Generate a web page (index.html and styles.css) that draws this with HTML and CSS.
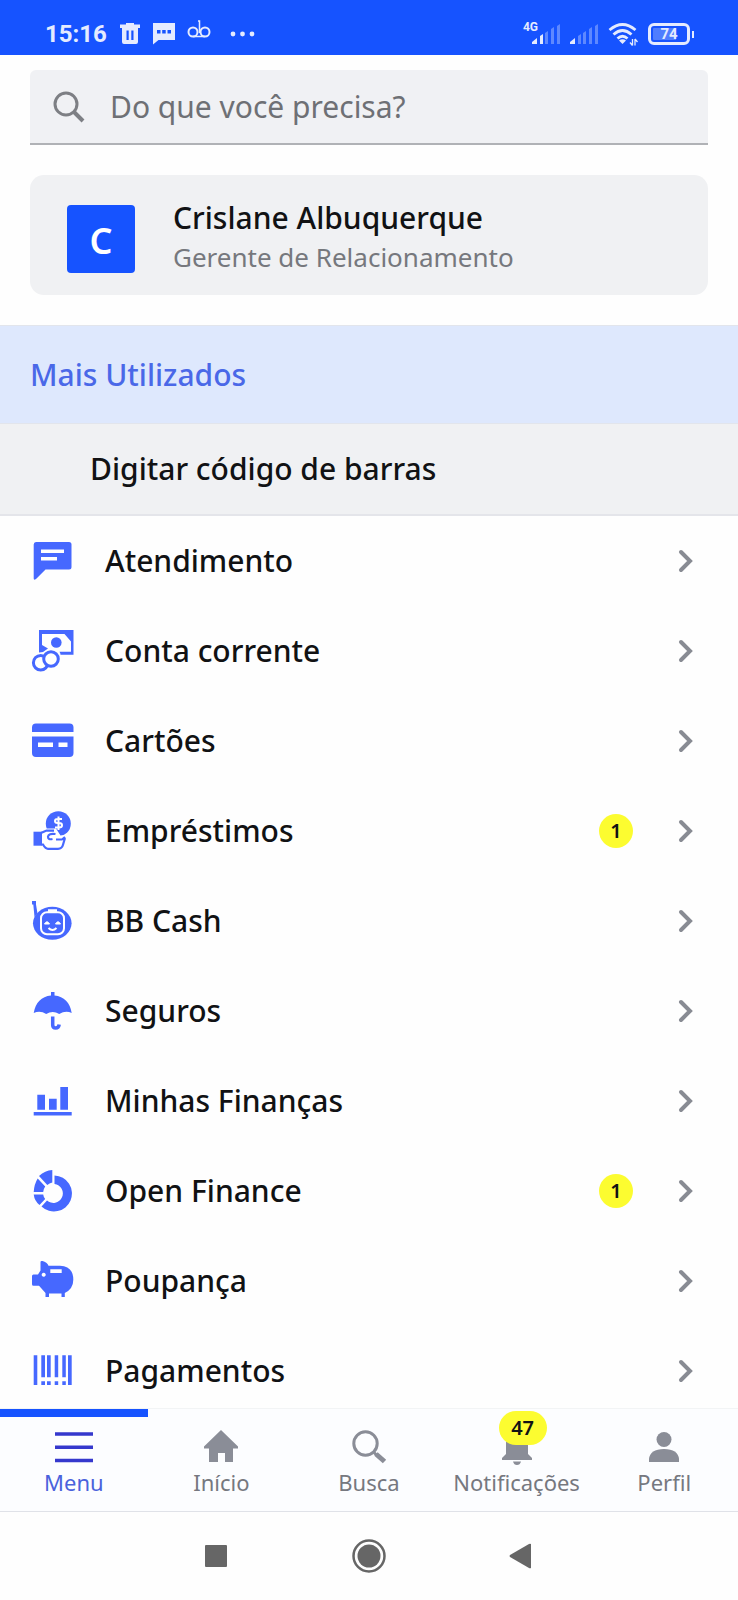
FILE: index.html
```
<!DOCTYPE html>
<html lang="pt-BR">
<head>
<meta charset="utf-8">
<meta name="viewport" content="width=device-width, initial-scale=1">
<title>Menu</title>
<link rel="stylesheet" href="styles.css">
</head>
<body>
<svg class="defs" aria-hidden="true">
  <symbol id="chevron" viewBox="0 0 16 24"><path d="M3 3l9 9-9 9" fill="none" stroke="currentColor" stroke-width="4" stroke-linecap="round"/></symbol>
</svg>

<div class="status">
  <div class="status-group">
    <span class="clock">15:16</span>
    <svg class="st-trash" width="20" height="22" viewBox="0 0 20 22" fill="currentColor"><path fill-rule="evenodd" d="M6 0h8v1.500h6V5H0V1.500h6zM2 5h16v14q0 2-2 2H4q-2 0-2-2zM6.500 7.500V17h2.200V7.500zM11.300 7.500V17h2.200V7.500z"/></svg>
    <svg class="st-chat" width="24" height="22" viewBox="0 0 24 22" fill="currentColor"><path fill-rule="evenodd" d="M1 0h22v17H6.500L1 21.500zM5 7v3.500h3.500V7zM10.200 7v3.500h3.500V7zM15.500 7v3.500H19V7z"/></svg>
    <svg class="st-voice" width="24" height="20" viewBox="0 0 24 20" fill="none" stroke="currentColor" stroke-width="2"><circle cx="6" cy="12" r="4.500"/><circle cx="18" cy="12" r="4.500"/><path d="M6 16.500h12M11 1h1.500v12" stroke-width="1.500"/></svg>
    <svg class="st-dots" width="26" height="6" viewBox="0 0 26 6" fill="currentColor"><circle cx="3" cy="3" r="2.400"/><circle cx="12.500" cy="3" r="2.400"/><circle cx="22" cy="3" r="2.400"/></svg>
  </div>
  <div class="status-group status-right">
    <div class="signal"><span class="net">4G</span>
      <svg width="28" height="20" viewBox="0 0 28 20" fill="currentColor"><path d="M0 20v-2l5-4v6zM8 12l3-2v10H8z"/><path opacity=".35" d="M13 9l3-2v13h-3zM19 5l3-2v17h-3zM25 2l3-2v20h-3z"/></svg>
    </div>
    <svg width="28" height="20" viewBox="0 0 28 20" fill="currentColor"><path d="M0 20v-2l5-4v6z"/><path opacity=".35" d="M8 12l3-2v10H8zM13 9l3-2v13h-3zM19 5l3-2v17h-3zM25 2l3-2v20h-3z"/></svg>
    <svg width="30" height="24" viewBox="0 0 30 24" fill="none" stroke="currentColor" stroke-width="2.800"><path d="M1.500 8Q14.500 -3 27.500 8M5.500 12.500q9-8 18 0M9.500 16.500q5-4.500 10 0"/><path d="M11 18.500q3.500-2.500 7 0L14.500 22z" fill="currentColor" stroke="none"/><path d="M24.500 17v6.500M22 20.500l2.500 3M27 23.500V17M29.500 20L27 17" stroke-width="1.300"/></svg>
    <div class="battery"><span>74</span></div>
  </div>
</div>

<header class="top">
  <label class="search">
    <svg width="32" height="32" viewBox="0 0 32 32" fill="none" stroke="currentColor" stroke-width="3"><circle cx="13" cy="13" r="11"/><path d="M20.500 20.500L30 30" stroke-width="4"/></svg>
    <input type="search" placeholder="Do que você precisa?" aria-label="Do que você precisa?">
  </label>
  <div class="manager">
    <div class="avatar">C</div>
    <div class="manager-text">
      <div class="manager-name">Crislane Albuquerque</div>
      <div class="manager-role">Gerente de Relacionamento</div>
    </div>
  </div>
</header>

<main class="content">
  <h2 class="section">Mais Utilizados</h2>
  <a class="shortcut" href="#">Digitar código de barras</a>
  <nav class="menu">
    <a class="row" href="#">
      <svg class="icon" viewBox="0 0 48 48" fill="currentColor"><path fill-rule="evenodd" d="M8 5h33q2.500 0 2.500 2.500V30q0 2.500-2.500 2.500H17.500L8 42q-2.300 1.500-2.300-.5v-34Q5.700 5 8 5zM13 12.500V16h23v-3.500zM13 20v3.500h16V20z"/></svg>
      <span class="label">Atendimento</span><svg class="chev"><use href="#chevron"/></svg></a>
    <a class="row" href="#">
      <svg class="icon" viewBox="0 0 48 48"><path fill="currentColor" fill-rule="evenodd" d="M11 3h34.500v24.700H32.500q0-1.600-1-3H43V14.500L36.500 7H14v11l6 3.500-5 3.500-4 .5z"/><circle cx="28.300" cy="15.500" r="5.300" fill="currentColor"/><circle cx="12.700" cy="35.700" r="7.300" fill="#fff" stroke="currentColor" stroke-width="3"/><circle cx="23" cy="32" r="7.300" fill="#fff" stroke="currentColor" stroke-width="3"/></svg>
      <span class="label">Conta corrente</span><svg class="chev"><use href="#chevron"/></svg></a>
    <a class="row" href="#">
      <svg class="icon" viewBox="0 0 48 48" fill="currentColor"><path fill-rule="evenodd" d="M4 15V10.500q0-4 4-4h33.500q4 0 4 4V15zM4 19.500h41.500V36q0 4-4 4H8q-4 0-4-4zM10 25.500V30h15v-4.500zM30.500 25.500V30h9v-4.500z"/></svg>
      <span class="label">Cartões</span><svg class="chev"><use href="#chevron"/></svg></a>
    <a class="row" href="#">
      <svg class="icon" viewBox="0 0 48 48"><circle cx="30.300" cy="16.700" r="12.500" fill="currentColor"/><path d="M34 12h-4.500q-2.500 0-2.500 2t2.500 2h1.500q3 0 3 2.200t-3 2.300H27M30.500 9.500V23" fill="none" stroke="#fff" stroke-width="2"/><path d="M14 21.500h14l4.500 7 6-.5-3 12-14 3-8-6z" fill="#fff"/><path d="M5.500 24.700H14v14H5.500z" fill="currentColor"/><path d="M13.500 25.800l5-2.200H26M13.500 37.500H15q2.500 4.300 5 4.300h10q4 0 5-4l2-6.800M27.500 27q-7-1-7.500 2.700 0 3.300 4.500 2.300M28 32.500h6l3-2.500" fill="none" stroke="currentColor" stroke-width="2.200"/></svg>
      <span class="label">Empréstimos</span><span class="badge">1</span><svg class="chev"><use href="#chevron"/></svg></a>
    <a class="row" href="#">
      <svg class="icon" viewBox="0 0 48 48"><path d="M4 4h4v3.500l1.500 9L6.500 20 5.300 7.500H4z" fill="currentColor"/><ellipse cx="24.300" cy="26.300" rx="19.300" ry="16.500" fill="currentColor"/><rect x="13" y="15.300" width="23" height="22" rx="6" fill="none" stroke="#fff" stroke-width="2"/><path d="M20 14h9" stroke="#fff" stroke-width="3.500"/><path d="M16.500 27q2.500-4.500 5 0zM27.500 27q2.500-4.500 5 0z" fill="#fff" stroke="#fff"/><path d="M20.500 31q4 4 8 0" fill="none" stroke="#fff" stroke-width="2"/></svg>
      <span class="label">BB Cash</span><svg class="chev"><use href="#chevron"/></svg></a>
    <a class="row" href="#">
      <svg class="icon" viewBox="0 0 48 48"><path d="M23 5h3.500v3.500Q41 10 43.700 26q-6-3-12.500 1-6.500-4-13 0-6-4-12.500-1Q8.500 10 23 8.500z" fill="currentColor"/><path d="M24.700 29.500V38q0 3 3 3t3.500-3.500" fill="none" stroke="currentColor" stroke-width="3.500"/></svg>
      <span class="label">Seguros</span><svg class="chev"><use href="#chevron"/></svg></a>
    <a class="row" href="#">
      <svg class="icon" viewBox="0 0 48 48" fill="currentColor"><path d="M9.300 17.700H17v15H9.300zM21 21.700h7.700v11H21zM32.300 10H40v22.700h-7.700zM5.700 35h38v3.500h-38z"/></svg>
      <span class="label">Minhas Finanças</span><svg class="chev"><use href="#chevron"/></svg></a>
    <a class="row" href="#">
      <svg class="icon" viewBox="0 0 48 48"><path fill="currentColor" d="M26.500 8.500A18 18 0 1 1 13.500 39.500L19 33.500A9.500 9.500 0 1 0 26.500 17zM24.300 3v12.500q-3 .5-5 2.500L11 9q6-5.500 13.300-6zM9.700 11.500l7.500 8q-1.800 2.500-2 5.500H5.700q.5-8 4-13.500zM5.700 27.500h9.500q.3 2.500 2 4.500L11.500 38q-5-4-5.800-10.500z"/></svg>
      <span class="label">Open Finance</span><span class="badge">1</span><svg class="chev"><use href="#chevron"/></svg></a>
    <a class="row" href="#">
      <svg class="icon" viewBox="0 0 48 48" fill="currentColor"><path fill-rule="evenodd" d="M12.500 5q0-1.500 2-1 4.500 1.200 6 4.700H32q13.300.5 13.300 14 0 9-8.500 13.300V40h-3.300v-3.500H21V40h-3.500v-4L11 28.700H5.500q-1.500 0-1.500-1.500V19q0-1.500 1.500-1.500H10l2.500-4zM22.300 12.300V16h11.400v-3.700zM15.700 15.700a2 2 0 1 0 .01 0z"/></svg>
      <span class="label">Poupança</span><svg class="chev"><use href="#chevron"/></svg></a>
    <a class="row" href="#">
      <svg class="icon" viewBox="0 0 48 48" fill="currentColor"><path d="M5.700 8.300h3.600V38H5.700zM40 8.300h3.700V38H40zM13.300 8.300H17v22h-3.700zM19 8.300h3.700v22H19zM26.700 8.300h3.500v22h-3.500zM34.300 8.300h3.500v22h-3.500zM13.300 34.300H17V38h-3.700zM19 34.300h3.700V38H19zM26.700 34.300h3.500V38h-3.500zM34.300 34.300h3.500V38h-3.500z"/></svg>
      <span class="label">Pagamentos</span><svg class="chev"><use href="#chevron"/></svg></a>
  </nav>
</main>

<nav class="tabs">
  <a class="tab active" href="#"><svg class="tab-icon" viewBox="0 0 40 36"><path d="M1 4h38M1 17.200h38M1 30.400h38" stroke="#3538cd" stroke-width="3.500"/></svg><span>Menu</span></a>
  <a class="tab" href="#"><svg class="tab-icon" viewBox="0 0 40 36" fill="currentColor"><path d="M20 0l17 16.500v2h-5V32h-8v-9h-7v9H8V18.500H3v-2z"/></svg><span>Início</span></a>
  <a class="tab" href="#"><svg class="tab-icon" viewBox="0 0 40 36" fill="none" stroke="currentColor"><circle cx="16.500" cy="13.500" r="11.700" stroke-width="3"/><path d="M24.500 22l3 3" stroke-width="3"/><path d="M27 24l8.500 7.500" stroke-width="5"/></svg><span>Busca</span></a>
  <a class="tab" href="#"><span class="bell"><svg class="tab-icon" viewBox="0 0 40 36" fill="currentColor"><path d="M9 8q2-7 11-7t11 7v16l4 4v2H5v-2l4-4zM16 31.500h8q-1 3.500-4 3.500t-4-3.500z"/></svg><b class="count">47</b></span><span>Notificações</span></a>
  <a class="tab" href="#"><svg class="tab-icon" viewBox="0 0 40 36" fill="currentColor"><circle cx="20" cy="9.500" r="7.500"/><path d="M5 32v-3q1-10 15-10t15 10v3z"/></svg><span>Perfil</span></a>
</nav>

<div class="system">
  <button aria-label="Recentes"><svg width="22" height="22" viewBox="0 0 22 22"><rect width="22" height="22" rx="1" fill="#666"/></svg></button>
  <button aria-label="Tela inicial"><svg width="34" height="34" viewBox="0 0 34 34"><circle cx="17" cy="17" r="15.500" fill="none" stroke="#666" stroke-width="2.500"/><circle cx="17" cy="17" r="11.500" fill="#666"/></svg></button>
  <button aria-label="Voltar"><svg width="26" height="26" viewBox="0 0 26 26"><path d="M22 1v24q-1 .5-2 0L1 14q-1-1 0-2L20 1q1-.5 2 0z" fill="#666"/></svg></button>
</div>
</body>
</html>
```
FILE: styles.css
```
* { box-sizing: border-box; }

body {
  margin: 0;
  height: 100vh;
  display: flex;
  flex-direction: column;
  background: #fefefe;
  color: #111214;
  font-family: "Noto Sans", "Open Sans", sans-serif;
}

a { color: inherit; text-decoration: none; }
svg { display: block; flex: none; }
.defs { position: absolute; width: 0; height: 0; }

/* status bar */
.status {
  flex: none;
  height: 55px;
  padding: 13px 48px 0 45px;
  display: flex;
  justify-content: space-between;
  background: #1653ff;
  color: #e4ebff;
  font-family: Roboto, sans-serif;
}
.status-group { display: flex; align-items: center; height: 42px; }
.clock { font-size: 24px; font-weight: 700; line-height: 42px; }
.st-trash { margin-left: 13px; }
.st-chat { margin-left: 12px; }
.st-voice { margin: 0 19px 8px 11px; }
.status-right { gap: 10px; }
.signal { display: flex; align-items: center; }
.net { font-size: 12px; font-weight: 700; line-height: 14px; margin: 0 -6px 14px 0; }
.battery {
  position: relative;
  width: 42px;
  height: 22px;
  border: 3px solid currentColor;
  border-radius: 6px;
  background: linear-gradient(90deg, #4f7dff 72%, transparent 72%) content-box;
  padding: 2px;
  font-size: 15px;
  font-weight: 700;
  line-height: 13px;
  text-align: center;
}
.battery::after {
  content: "";
  position: absolute;
  right: -7px;
  top: 5px;
  width: 2px;
  height: 7px;
  background: currentColor;
}

/* search and manager card */
.top {
  flex: none;
  padding: 15px 30px 30px;
  display: flex;
  flex-direction: column;
  gap: 30px;
}
.search {
  height: 75px;
  padding: 0 23px;
  display: flex;
  align-items: center;
  gap: 25px;
  background: #f0f1f4;
  border-bottom: 2px solid #b0b2b6;
  border-radius: 6px 6px 0 0;
  color: #7d7f84;
}
.search input {
  flex: 1;
  min-width: 0;
  padding: 0;
  border: 0;
  outline: 0;
  background: none;
  font: 400 30px/40px "Noto Sans", sans-serif;
  color: #111214;
}
.search input::placeholder { color: #6e7075; opacity: 1; }
.manager {
  height: 120px;
  padding: 4px 37px 0;
  display: flex;
  align-items: center;
  gap: 38px;
  background: #f0f1f3;
  border-radius: 14px;
}
.avatar {
  width: 68px;
  height: 68px;
  margin-top: 4px;
  border-radius: 4px;
  background: #1653ff;
  color: #fff;
  font-size: 36px;
  font-weight: 600;
  line-height: 72px;
  text-align: center;
}
.manager-name { font-size: 30px; font-weight: 500; line-height: 40px; }
.manager-role { font-size: 26px; line-height: 38px; color: #76787d; }

/* menu */
.content {
  flex: 1;
  min-height: 0;
  overflow: hidden;
}
.section {
  margin: 0;
  height: 99px;
  padding: 0 30px;
  border: solid #e2e5ec;
  border-width: 1px 0;
  background: #dee8fd;
  color: #4a68e8;
  font-size: 30px;
  font-weight: 500;
  line-height: 97px;
}
.shortcut {
  display: block;
  padding: 0 90px;
  border-bottom: 2px solid #e4e5ea;
  background: #f0f1f3;
  font-size: 30px;
  font-weight: 500;
  line-height: 90px;
}
.row {
  height: 90px;
  padding: 0 44px 0 28px;
  display: flex;
  align-items: center;
}
.icon { width: 48px; height: 48px; margin-right: 29px; color: #4668ff; }
.label { flex: 1; font-size: 30px; font-weight: 500; line-height: 40px; }
.badge {
  width: 34px;
  height: 34px;
  margin-right: 45px;
  border-radius: 17px;
  background: #fcfc30;
  font-size: 20px;
  font-weight: 600;
  line-height: 34px;
  text-align: center;
}
.chev { width: 16px; height: 24px; color: #888b93; }

/* tab bar */
.tabs {
  flex: none;
  height: 104px;
  display: grid;
  grid-template-columns: repeat(5, 1fr);
  border-top: 1px solid #f2f4f5;
  border-bottom: 1px solid #e0e2e8;
  background: #fcfdff;
}
.tab {
  padding-top: 13px;
  border-top: 8px solid transparent;
  display: flex;
  flex-direction: column;
  align-items: center;
  color: #8a8d97;
  font-size: 22px;
  line-height: 32px;
}
.tab > span:last-child { color: #76787f; }
.active { border-top-color: #1653ff; }
.active > span:last-child { color: #4a62dc; }
.tab-icon { width: 40px; height: 36px; }
.bell { position: relative; }
.count {
  position: absolute;
  left: 2px;
  top: -19px;
  width: 48px;
  height: 34px;
  border-radius: 17px;
  background: #fcfc30;
  color: #111214;
  font-size: 20px;
  font-weight: 600;
  line-height: 34px;
  text-align: center;
}

/* system buttons */
.system {
  flex: none;
  height: 88px;
  padding: 0 140px;
  display: grid;
  grid-template-columns: repeat(3, 1fr);
  background: #fefefe;
}
.system button {
  display: flex;
  align-items: center;
  justify-content: center;
  padding: 0;
  border: 0;
  background: none;
}
```
